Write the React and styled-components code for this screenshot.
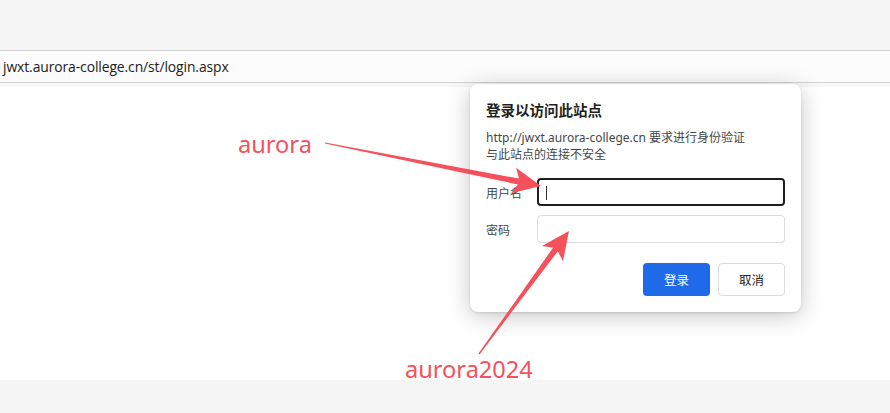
import React from 'react';
import styled, { createGlobalStyle } from 'styled-components';

const GlobalStyle = createGlobalStyle`
    html, body {
        margin: 0;
        padding: 0;
        background: #f5f5f5;
    }
    body {
        font-family: "Noto Sans", "Noto Sans CJK SC", sans-serif;
        overflow: hidden;
    }
`

const colors = {
    chrome: '#f5f5f5',
    line: '#d3d3d3',
    red: '#f5515a',
    blue: '#1f6ae8',
    text: '#1f1f1f',
    muted: '#444746',
}

const Screen = styled.div`
    position: relative;
    width: 890px;
    height: 413px;
    display: flex;
    flex-direction: column;
    background: ${colors.chrome};
`

const Toolbar = styled.div`
    height: 50px;
    background: ${colors.chrome};
`

const AddressBar = styled.div`
    height: 31px;
    display: flex;
    align-items: center;
    padding-left: 3px;
    background: #fcfcfc;
    border-top: 1px solid ${colors.line};
    border-bottom: 1px solid ${colors.line};
    font-family: "Open Sans", "Noto Sans", sans-serif;
    font-size: 13.9px;
    color: #202020;
    letter-spacing: -0.1px;
`

const Divider = styled.div`
    height: 4px;
    background: #f8f8f8;
`

const Page = styled.div`
    height: 293px;
    background: #fff;
`

const Dialog = styled.div`
    position: absolute;
    left: 470px;
    top: 84px;
    width: 331px;
    box-sizing: border-box;
    padding: 16px;
    display: flex;
    flex-direction: column;
    background: #fff;
    border-radius: 8px;
    box-shadow: 0 4px 24px rgba(0, 0, 0, 0.22), 0 1px 3px rgba(0, 0, 0, 0.12);
    font-family: "Noto Sans", "Noto Sans CJK SC", sans-serif;
    color: ${colors.text};
`

const Title = styled.h2`
    margin: 0;
    font-size: 14.5px;
    line-height: 20px;
    font-weight: 700;
    font-family: "Noto Sans CJK SC", sans-serif;
`

const Desc = styled.p`
    margin: 9px 0 0;
    font-size: 12px;
    line-height: 17px;
    color: ${colors.muted};
`

const Form = styled.div`
    margin-top: 15px;
    display: flex;
    flex-direction: column;
    gap: 9px;
`

const Row = styled.label`
    display: flex;
    align-items: center;
`

const Label = styled.span`
    width: 51px;
    font-size: 12px;
    font-family: "Noto Sans CJK SC", sans-serif;
    color: ${colors.muted};
`

const Field = styled.div`
    position: relative;
    width: 248px;
    height: 28px;
    box-sizing: border-box;
    border-radius: 4px;
    border: ${p => (p.$focused ? `2px solid ${colors.text}` : '1px solid #dadce0')};
`

const Caret = styled.span`
    position: absolute;
    left: 7px;
    top: 6px;
    width: 1px;
    height: 14px;
    background: #333;
`

const Actions = styled.div`
    margin-top: 20px;
    display: flex;
    justify-content: flex-end;
    gap: 8px;
`

const Button = styled.button`
    width: 67px;
    height: 33px;
    box-sizing: border-box;
    border-radius: 4px;
    font-family: "Noto Sans CJK SC", sans-serif;
    font-size: 12.5px;
    cursor: pointer;
    background: ${p => (p.$primary ? colors.blue : '#fff')};
    color: ${p => (p.$primary ? '#fff' : colors.text)};
    border: ${p => (p.$primary ? 'none' : '1px solid #dadce0')};
`

const Note = styled.span`
    position: absolute;
    left: ${p => p.$x}px;
    top: ${p => p.$y}px;
    font-family: "Noto Sans", sans-serif;
    font-size: 23.6px;
    line-height: 1;
    color: ${colors.red};
`

const Marks = styled.svg`
    position: absolute;
    left: 0;
    top: 0;
    pointer-events: none;
`

// tapered arrow: thin tail, wider shaft near the head, swept barbs
function arrowPoints(tx, ty, px, py, head = 28, half = 13, neck = 6) {
    const dx = px - tx;
    const dy = py - ty;
    const len = Math.hypot(dx, dy);
    const ux = dx / len;
    const uy = dy / len;
    const nx = -uy;
    const ny = ux;
    const bx = px - ux * head;
    const by = py - uy * head;
    const pt = (x, y) => `${x.toFixed(1)},${y.toFixed(1)}`;
    return [
        pt(tx + nx * 0.6, ty + ny * 0.6),
        pt(bx + ux * 5 + nx * neck / 2, by + uy * 5 + ny * neck / 2),
        pt(bx + nx * half, by + ny * half),
        pt(px, py),
        pt(bx - nx * half, by - ny * half),
        pt(bx + ux * 5 - nx * neck / 2, by + uy * 5 - ny * neck / 2),
        pt(tx - nx * 0.6, ty - ny * 0.6),
    ].join(' ');
}

const App = () => (
    <>
        <GlobalStyle />
        <Screen>
            <Toolbar />
            <AddressBar>jwxt.aurora-college.cn/st/login.aspx</AddressBar>
            <Divider />
            <Page />

            <Dialog>
                <Title>登录以访问此站点</Title>
                <Desc>
                    http://jwxt.aurora-college.cn 要求进行身份验证<br />
                    与此站点的连接不安全
                </Desc>
                <Form>
                    <Row>
                        <Label>用户名</Label>
                        <Field $focused><Caret /></Field>
                    </Row>
                    <Row>
                        <Label>密码</Label>
                        <Field />
                    </Row>
                </Form>
                <Actions>
                    <Button $primary>登录</Button>
                    <Button>取消</Button>
                </Actions>
            </Dialog>

            <Note $x={238} $y={133}>aurora</Note>
            <Note $x={405} $y={358}>aurora2024</Note>
            <Marks width="890" height="413">
                <polygon points={arrowPoints(325, 143, 541, 186)} fill={colors.red} />
                <polygon points={arrowPoints(479, 354, 569, 231)} fill={colors.red} />
            </Marks>
        </Screen>
    </>
);

export default App;
